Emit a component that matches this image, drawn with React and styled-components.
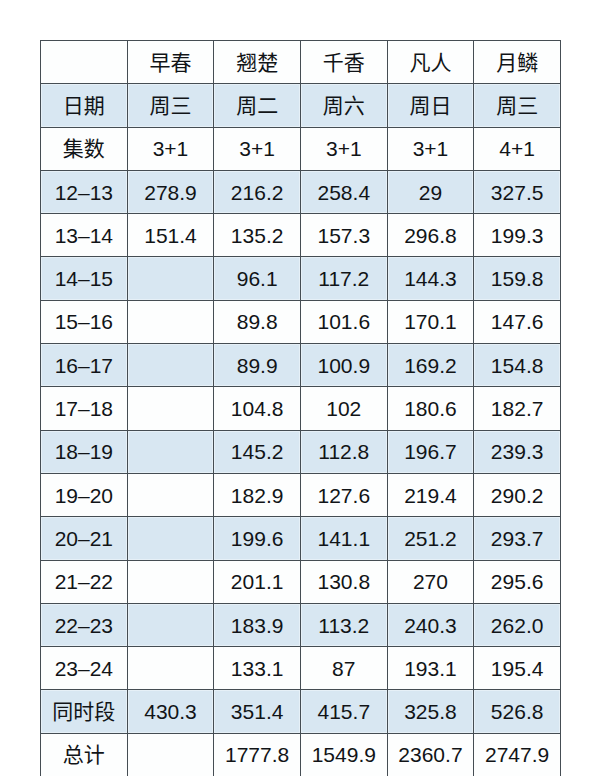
import React from 'react';
import styled, { createGlobalStyle } from 'styled-components';

const GlobalStyle = createGlobalStyle`
  html, body {
    margin: 0;
    padding: 0;
    background: #ffffff;
  }
`;

const Page = styled.div`
  width: 600px;
  height: 776px;
  overflow: hidden;
  padding: 40px 0 0 40px;
  box-sizing: border-box;
  background: #ffffff;
  font-family: "Liberation Sans", "Noto Sans CJK SC", sans-serif;
`;

const Table = styled.table`
  border-collapse: collapse;
  width: 521px;
  table-layout: fixed;
  color: #111417;
`;

const Row = styled.tr`
  height: 43.3px;
  background: ${(p) => (p.$shaded ? '#d8e7f2' : '#fdfefe')};
`;

const Cell = styled.td`
  border: 1px solid #454d53;
  padding: 0;
  text-align: center;
  vertical-align: middle;
  font-size: 21px;
  line-height: 1;
  box-shadow: ${(p) => (p.$shaded ? 'inset 0 0 0 1px #e6f0f7' : 'none')};
`;

const header = ['', '早春', '翘楚', '千香', '凡人', '月鳞'];

const rows = [
  ['日期', '周三', '周二', '周六', '周日', '周三'],
  ['集数', '3+1', '3+1', '3+1', '3+1', '4+1'],
  ['12–13', '278.9', '216.2', '258.4', '29', '327.5'],
  ['13–14', '151.4', '135.2', '157.3', '296.8', '199.3'],
  ['14–15', '', '96.1', '117.2', '144.3', '159.8'],
  ['15–16', '', '89.8', '101.6', '170.1', '147.6'],
  ['16–17', '', '89.9', '100.9', '169.2', '154.8'],
  ['17–18', '', '104.8', '102', '180.6', '182.7'],
  ['18–19', '', '145.2', '112.8', '196.7', '239.3'],
  ['19–20', '', '182.9', '127.6', '219.4', '290.2'],
  ['20–21', '', '199.6', '141.1', '251.2', '293.7'],
  ['21–22', '', '201.1', '130.8', '270', '295.6'],
  ['22–23', '', '183.9', '113.2', '240.3', '262.0'],
  ['23–24', '', '133.1', '87', '193.1', '195.4'],
  ['同时段', '430.3', '351.4', '415.7', '325.8', '526.8'],
  ['总计', '', '1777.8', '1549.9', '2360.7', '2747.9'],
];

export default function App() {
  return (
    <>
      <GlobalStyle />
      <Page>
        <Table>
          <tbody>
            <Row>
              {header.map((h, i) => (
                <Cell key={i}>{h}</Cell>
              ))}
            </Row>
            {rows.map((r, ri) => {
              const shaded = ri % 2 === 0;
              return (
                <Row key={ri} $shaded={shaded}>
                  {r.map((c, ci) => (
                    <Cell key={ci} $shaded={shaded}>{c}</Cell>
                  ))}
                </Row>
              );
            })}
          </tbody>
        </Table>
      </Page>
    </>
  );
}
